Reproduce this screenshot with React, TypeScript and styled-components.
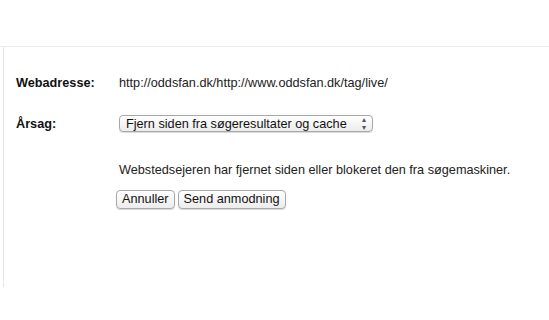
import React from 'react';
import styled, { createGlobalStyle } from 'styled-components';

const GlobalStyle = createGlobalStyle`
    html, body {
        margin: 0;
        padding: 0;
        background: #ffffff;
    }
    body {
        font-family: 'Liberation Sans', Arial, sans-serif;
        font-size: 12.7px;
        color: #222222;
    }
`;

const Page = styled.div`
    width: 549px;
    height: 320px;
    padding-top: 46px;
    box-sizing: border-box;
`;

const Frame = styled.div`
    border-top: 1px solid #ebebeb;
`;

const Panel = styled.div`
    margin-left: 3px;
    height: 240px;
    border-left: 1px solid #e6e6e6;
    padding: 29px 0 0 12px;
    box-sizing: border-box;
`;

const Row = styled.div<{ $gap?: number }>`
    display: grid;
    grid-template-columns: 103px 1fr;
    align-items: center;
    margin-bottom: ${(p) => p.$gap ?? 0}px;
`;

const Label = styled.div`
    font-weight: bold;
    color: #111111;
`;

const Value = styled.div`
    color: #222222;
`;

const SelectBox = styled.div`
    display: inline-flex;
    align-items: center;
    justify-content: space-between;
    width: 254px;
    height: 17px;
    box-sizing: border-box;
    padding: 0 6px 0 6px;
    border: 1px solid #a8a8a8;
    border-radius: 4px;
    background: linear-gradient(#ffffff, #ececec);
    box-shadow: 0 1px 1px rgba(0, 0, 0, 0.15);
    color: #111111;
`;

const Arrows = styled.span`
    font-size: 8px;
    line-height: 1;
    color: #555555;
    display: flex;
    flex-direction: column;
    align-items: center;
`;

const Note = styled.p`
    margin: 0 0 13px 103px;
    color: #222222;
`;

const Buttons = styled.div`
    margin-left: 100px;
    display: flex;
    gap: 3px;
`;

const Button = styled.button`
    font-family: 'Liberation Sans', Arial, sans-serif;
    font-size: 12.7px;
    color: #111111;
    height: 19px;
    padding: 0 5px;
    border: 1px solid #a8a8a8;
    border-radius: 4px;
    background: linear-gradient(#ffffff, #ececec);
    box-shadow: 0 1px 1px rgba(0, 0, 0, 0.15);
    line-height: 17px;
`;

export default function App() {
    return (
        <Page>
            <GlobalStyle />
            <Frame>
                <Panel>
                    <Row $gap={25}>
                        <Label>Webadresse:</Label>
                        <Value>http://oddsfan.dk/http://www.oddsfan.dk/tag/live/</Value>
                    </Row>
                    <Row $gap={31}>
                        <Label>Årsag:</Label>
                        <div>
                            <SelectBox>
                                <span>Fjern siden fra søgeresultater og cache</span>
                                <Arrows>
                                    <span>▴</span>
                                    <span>▾</span>
                                </Arrows>
                            </SelectBox>
                        </div>
                    </Row>
                    <Note>Webstedsejeren har fjernet siden eller blokeret den fra søgemaskiner.</Note>
                    <Buttons>
                        <Button>Annuller</Button>
                        <Button>Send anmodning</Button>
                    </Buttons>
                </Panel>
            </Frame>
        </Page>
    );
}
